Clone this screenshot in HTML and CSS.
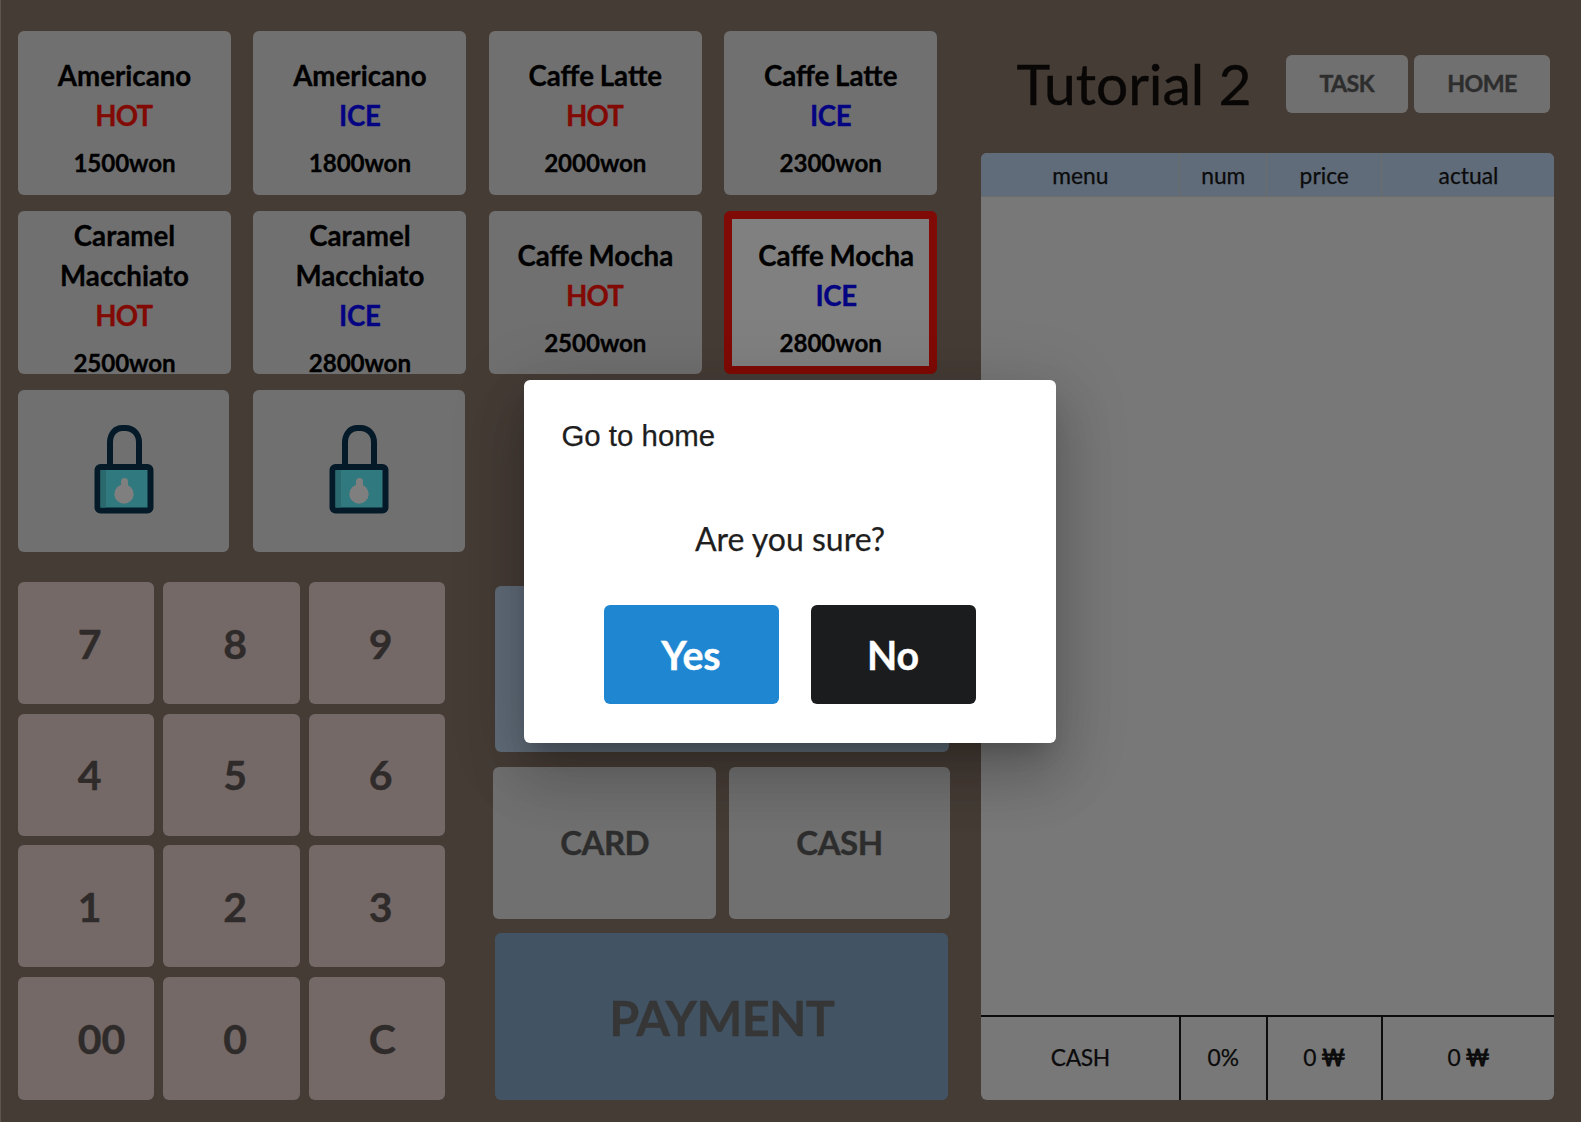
FILE: index.html
```html
<!DOCTYPE html>
<html lang="en">
<head>
<meta charset="utf-8">
<title>Tutorial 2</title>
<link rel="stylesheet" href="styles.css">
</head>
<body>
<svg class="defs" width="0" height="0" aria-hidden="true">
  <symbol id="lock" viewBox="0 0 60 90">
    <path d="M16 44V18.500C16 9 22 4 28 4H32C38 4 45 9 45 18.500V44" fill="none" stroke="#051a29" stroke-width="6"/>
    <rect x="3.500" y="43" width="53" height="43.500" rx="3" fill="#30797f" stroke="#051a29" stroke-width="6"/>
    <rect x="6.500" y="46" width="5.500" height="37.500" fill="#2a696d"/>
    <circle cx="30" cy="70" r="9.700" fill="#7f7f7f"/>
    <rect x="27" y="54" width="7" height="12" rx="3.500" fill="#7f7f7f"/>
  </symbol>
</svg>
<div class="pos">
  <main class="left">
    <section class="menu">
      <div class="card"><p class="name">Americano<br><span class="hot">HOT</span></p><p class="cost">1500won</p></div>
      <div class="card"><p class="name">Americano<br><span class="ice">ICE</span></p><p class="cost">1800won</p></div>
      <div class="card"><p class="name">Caffe Latte<br><span class="hot">HOT</span></p><p class="cost">2000won</p></div>
      <div class="card"><p class="name">Caffe Latte<br><span class="ice">ICE</span></p><p class="cost">2300won</p></div>
      <div class="card tall"><p class="name">Caramel<br>Macchiato<br><span class="hot">HOT</span></p><p class="cost">2500won</p></div>
      <div class="card tall"><p class="name">Caramel<br>Macchiato<br><span class="ice">ICE</span></p><p class="cost">2800won</p></div>
      <div class="card"><p class="name">Caffe Mocha<br><span class="hot">HOT</span></p><p class="cost">2500won</p></div>
      <div class="card target"><p class="name">Caffe Mocha<br><span class="ice">ICE</span></p><p class="cost">2800won</p></div>
      <div class="card locked"><svg class="lock"><use href="#lock"/></svg></div>
      <div class="card locked"><svg class="lock"><use href="#lock"/></svg></div>
    </section>
    <section class="lower">
      <div class="keypad">
        <button class="key">7</button><button class="key">8</button><button class="key">9</button>
        <button class="key">4</button><button class="key">5</button><button class="key">6</button>
        <button class="key">1</button><button class="key">2</button><button class="key">3</button>
        <button class="key">00</button><button class="key">0</button><button class="key">C</button>
      </div>
      <div class="pay">
        <div class="amount"></div>
        <div class="methods"><button class="method">CARD</button><button class="method">CASH</button></div>
        <button class="payment">PAYMENT</button>
      </div>
    </section>
  </main>
  <aside class="right">
    <header class="top">
      <h1 class="title">Tutorial 2</h1>
      <button class="nav task">TASK</button>
      <button class="nav home">HOME</button>
    </header>
    <section class="order">
      <div class="row head"><div>menu</div><div>num</div><div>price</div><div>actual</div></div>
      <div class="items"></div>
      <div class="row foot"><div>CASH</div><div>0%</div><div>0 <span class="won">₩</span></div><div>0 <span class="won">₩</span></div></div>
    </section>
  </aside>
</div>
<div class="dialog">
  <h2 class="dialog-title">Go to home</h2>
  <p class="question">Are you sure?</p>
  <div class="actions"><button class="yes">Yes</button><button class="no">No</button></div>
</div>
</body>
</html>
```
FILE: styles.css
```css
* { box-sizing: border-box; }
body {
  margin: 0;
  width: 1581px;
  height: 1122px;
  overflow: hidden;
  background: #463c36;
  font-family: Lato, "Liberation Sans", sans-serif;
  color: #000;
}
button { border: 0; margin: 0; padding: 0; font-family: inherit; font-weight: 700; color: #2d2d2d; -webkit-text-stroke: .4px currentColor; }
p, h1, h2 { margin: 0; font-weight: 400; }
.defs { display: block; height: 0; }

.pos { display: flex; height: 1122px; border-left: 1px solid #5d5550; }
.left { width: 979.5px; padding: 31px 0 0 17px; }

.menu {
  display: grid;
  grid-template-columns: repeat(4, 213px);
  grid-template-rows: 163.5px 163.5px 162px;
  gap: 16px 22.4px;
}
.card { background: #707070; border-radius: 6px; padding-top: 25px; text-align: center; }
.card.tall { padding-top: 5.5px; }
.name { font-size: 27.7px; line-height: 40px; font-weight: 700; word-spacing: -1px; -webkit-text-stroke: .3px currentColor; }
.cost { font-size: 24.2px; line-height: 36px; font-weight: 700; margin-top: 9.2px; letter-spacing: -.1px; -webkit-text-stroke: .3px currentColor; }
.hot { color: #820a05; letter-spacing: -.8px; margin-right: 1.5px; }
.ice { color: #040482; letter-spacing: -.3px; }
.card.target { background: #808080; border: 8px solid #800a05; padding-top: 17px; }
.target .name { padding-left: 10px; margin-right: -1px; white-space: nowrap; }
.card.locked { width: 211.3px; padding: 34px 0 0; display: flex; justify-content: center; align-items: flex-start; }
.lock { width: 60px; height: 90px; display: block; }

.lower { display: flex; margin-top: 30px; }
.keypad {
  display: grid;
  grid-template-columns: repeat(3, 136.2px);
  grid-template-rows: 122px 122px 122px 123.5px;
  gap: 9.5px 9.3px;
}
.key { background: #746967; border-radius: 6px; font-size: 41px; color: #2f2b2a; text-align: left; padding-left: 59.8px; }

.pay { width: 457px; margin: 4px 0 0 48.3px; }
.amount { height: 166px; margin: 0 1.5px; border-radius: 6px; background: #606c79; }
.methods { display: flex; gap: 13px; margin-top: 14.5px; }
.method { width: 222.5px; height: 152.5px; border-radius: 6px; background: #707070; font-size: 33px; letter-spacing: -.5px; padding-bottom: 1px; }
.method + .method { width: 221px; }
.payment { display: block; width: 453.5px; height: 167px; margin: 14px 1.5px 0; border-radius: 6px; background: #425464; font-size: 48.5px; letter-spacing: -.6px; color: #363636; }

.right { width: 573.5px; }
.top { display: flex; align-items: center; height: 153px; }
.title { width: 305.5px; height: 96px; line-height: 96px; margin-top: 12px; padding-left: 36px; font-size: 57px; color: #080706; white-space: nowrap; -webkit-text-stroke: .4px currentColor; letter-spacing: -.1px; }
.nav { height: 58px; margin-top: 15px; padding-bottom: 2px; border-radius: 6px; background: #707070; font-size: 23.2px; letter-spacing: -.6px; }
.task { width: 121.5px; }
.home { width: 136px; margin-left: 6.5px; }

.order { display: flex; flex-direction: column; height: 947px; background: #787878; border-radius: 6px; overflow: hidden; }
.row { display: grid; grid-template-columns: 198.5px 86.5px 115.5px 1fr; font-size: 22.8px; text-align: center; color: #0b0b0b; -webkit-text-stroke: .25px currentColor; }
.row > div + div { border-left: 1px solid #6c6d6b; }
.head { height: 44px; line-height: 44px; background: #606c79; border-bottom: 1px solid #6d6d6d; }
.head > div { padding-left: 1px; }
.items { flex: 1; }
.foot { height: 85.5px; line-height: 80px; border-top: 2px solid #0b0b0b; }
.row.foot > div + div { border-left: 2px solid #0d0d0d; }
.foot > div:first-child { letter-spacing: -.4px; padding-left: 1px; }
.won { -webkit-text-stroke: .9px currentColor; margin-left: -1px; }

.dialog {
  position: absolute;
  left: 524px;
  top: 380px;
  width: 532px;
  height: 362.5px;
  border-radius: 6px;
  background: #fff;
  color: #1e1e1e;
  box-shadow: 0 16px 22px -10px rgba(0,0,0,.2), 0 35px 56px 4px rgba(0,0,0,.14), 0 13px 68px 12px rgba(0,0,0,.12);
}
.dialog-title { padding: 35.5px 0 0 37.5px; font: 29.4px/40px "Liberation Sans", Arial, sans-serif; -webkit-text-stroke: .25px currentColor; }
.question { margin-top: 63px; font-size: 32px; line-height: 40px; text-align: center; -webkit-text-stroke: .25px currentColor; }
.actions { display: flex; justify-content: center; gap: 32.5px; margin-top: 46.5px; }
.yes, .no { height: 99px; padding-right: 1px; border-radius: 6px; font-size: 39.3px; color: #fff; }
.yes { width: 174.5px; background: #1f87d1; }
.no { width: 164.5px; background: #1b1c1d; }
```
